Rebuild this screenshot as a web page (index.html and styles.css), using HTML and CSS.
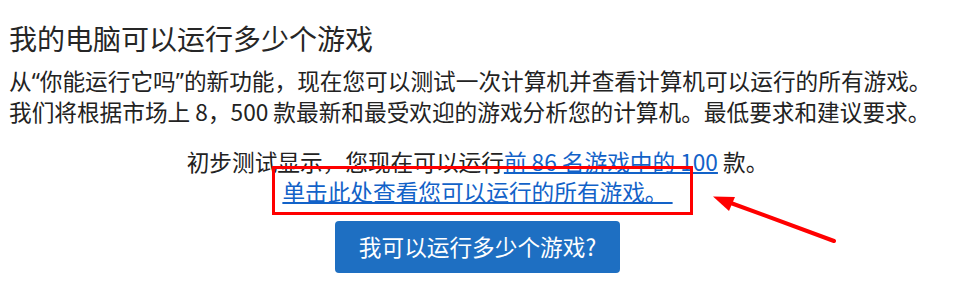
FILE: index.html
```html
<!DOCTYPE html>
<html lang="zh-CN">
<head>
<meta charset="utf-8">
<title>我的电脑可以运行多少个游戏</title>
<link rel="stylesheet" href="styles.css">
</head>
<body>
<main class="page">
  <h1 class="title">我的电脑可以运行多少个游戏</h1>
  <p class="intro">从<span class="q">“</span>你能运行它吗<span class="q">”</span>的新功能，现在您可以测试一次计算机并查看计算机可以运行的所有游戏。<br>我们将根据市场上 8，500 款最新和最受欢迎的游戏分析您的计算机。最低要求和建议要求。</p>
  <div class="result">
    <p class="line">初步测试显示，您现在可以运行<a class="link" href="#">前 86 名游戏中的 100</a> 款。</p>
    <p class="line"><a class="link" href="#">单击此处查看您可以运行的所有游戏。 </a></p>
    <a class="btn" href="#">我可以运行多少个游戏?</a>
  </div>
</main>
<svg class="annot" width="954" height="285" viewBox="0 0 954 285" aria-hidden="true">
  <rect x="273.5" y="167.5" width="418" height="46" fill="none" stroke="#ff0000" stroke-width="3"/>
  <line x1="834" y1="241" x2="724" y2="200.5" stroke="#ff0000" stroke-width="4" stroke-linecap="round"/>
  <polygon points="713,196.5 735,197 729,211" fill="#ff0000"/>
</svg>
</body>
</html>
```
FILE: styles.css
```css
html, body {
  margin: 0;
  padding: 0;
  background: #ffffff;
}
body {
  font-family: "Noto Sans CJK SC", "Noto Sans", sans-serif;
  color: #222222;
}
.page {
  padding: 20px 8px 0 9px;
}
.title {
  margin: 0;
  font-size: 28px;
  font-weight: 400;
  line-height: 36px;
  color: #262626;
}
.intro {
  margin: 10px 0 0 0;
  font-size: 22.67px;
  line-height: 30px;
  white-space: nowrap;
}
.q {
  font-family: "Noto Sans", sans-serif;
}
.result {
  margin-top: 20px;
  display: flex;
  flex-direction: column;
  align-items: center;
}
.line {
  margin: 0;
  font-size: 22.67px;
  line-height: 30px;
  text-align: center;
  white-space: pre;
}
.link {
  color: #1262c8;
  text-decoration: underline;
  text-underline-offset: 1px;
  text-decoration-thickness: 1.5px;
}
.btn {
  margin-top: 14px;
  display: inline-block;
  padding: 11px 24px;
  font-size: 22.67px;
  line-height: 30px;
  color: #ffffff;
  background: #1e6fc2;
  border-radius: 4px;
  text-decoration: none;
}
.annot {
  position: absolute;
  left: 0;
  top: 0;
  pointer-events: none;
}
```
